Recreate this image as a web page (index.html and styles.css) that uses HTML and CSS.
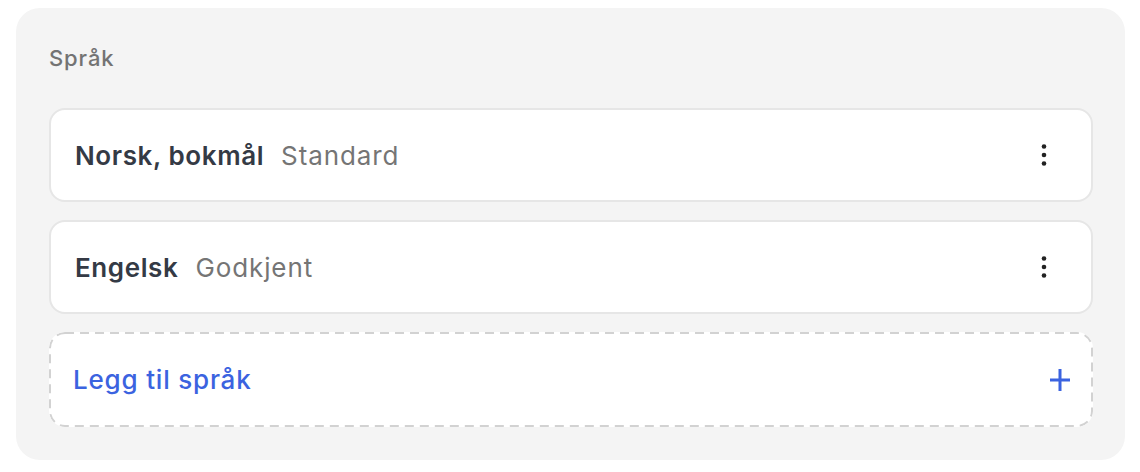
FILE: index.html
```html
<!DOCTYPE html>
<html lang="no">
<head>
<meta charset="utf-8">
<link rel="stylesheet" href="styles.css">
</head>
<body>
<section class="panel">
  <h2 class="title">Språk</h2>
  <ul class="list">
    <li class="item">
      <span class="name">Norsk, bokmål</span>
      <span class="status">Standard</span>
      <button class="more" aria-label="Flere valg">
        <svg width="24" height="24" viewBox="0 0 24 24"><circle cx="12" cy="3.5" r="2.3" fill="#222"/><circle cx="12" cy="12" r="2.3" fill="#222"/><circle cx="12" cy="20.5" r="2.3" fill="#222"/></svg>
      </button>
    </li>
    <li class="item">
      <span class="name">Engelsk</span>
      <span class="status">Godkjent</span>
      <button class="more" aria-label="Flere valg">
        <svg width="24" height="24" viewBox="0 0 24 24"><circle cx="12" cy="3.5" r="2.3" fill="#222"/><circle cx="12" cy="12" r="2.3" fill="#222"/><circle cx="12" cy="20.5" r="2.3" fill="#222"/></svg>
      </button>
    </li>
  </ul>
  <button class="add">
    <span class="add-label">Legg til språk</span>
    <svg width="24" height="24" viewBox="0 0 24 24"><path d="M12 1v22M2 12h20" stroke="#3b63e0" stroke-width="3" fill="none"/></svg>
  </button>
</section>
</body>
</html>
```
FILE: styles.css
```css
* { box-sizing: border-box; }
body {
  margin: 8px 15px 8px 16px;
  font-family: Inter, "Noto Sans", sans-serif;
  background: #fff;
}
.panel {
  background: #f4f4f4;
  border-radius: 24px;
  padding: 36px 32px 33px 33px;
}
.title {
  margin: 0 0 36px;
  font-size: 22px;
  line-height: 28px;
  font-weight: 500;
  letter-spacing: 0.9px;
  color: #737373;
}
.list {
  list-style: none;
  margin: 0;
  padding: 0;
  display: flex;
  flex-direction: column;
  gap: 18px;
}
.item {
  display: flex;
  align-items: center;
  height: 94px;
  background: #fff;
  border: 2px solid #e6e6e6;
  border-radius: 16px;
  padding: 0 35px 0 24px;
}
.name {
  font-size: 26px;
  font-weight: 600;
  letter-spacing: 0.6px;
  color: #343a45;
  margin-right: 17px;
}
.status {
  font-size: 26px;
  font-weight: 400;
  letter-spacing: 0.9px;
  color: #757575;
}
.more {
  margin-left: auto;
  border: 0;
  background: none;
  padding: 0;
  width: 24px;
  height: 24px;
  display: flex;
}
.add {
  margin-top: 18px;
  width: 100%;
  height: 95px;
  display: flex;
  align-items: center;
  justify-content: space-between;
  background-color: #fff;
  background-image: url("data:image/svg+xml,%3Csvg xmlns='http://www.w3.org/2000/svg'%3E%3Crect x='1' y='1' width='calc(100%25 - 2px)' height='calc(100%25 - 2px)' rx='15' ry='15' fill='none' stroke='%23d2d2d2' stroke-width='2' stroke-dasharray='9 6'/%3E%3C/svg%3E");
  border: 0;
  border-radius: 16px;
  padding: 0 21px 0 24px;
  font-family: inherit;
  cursor: pointer;
}
.add-label {
  font-size: 26px;
  font-weight: 500;
  letter-spacing: 0.8px;
  color: #3b63e0;
}
.add svg { display: block; }
```
